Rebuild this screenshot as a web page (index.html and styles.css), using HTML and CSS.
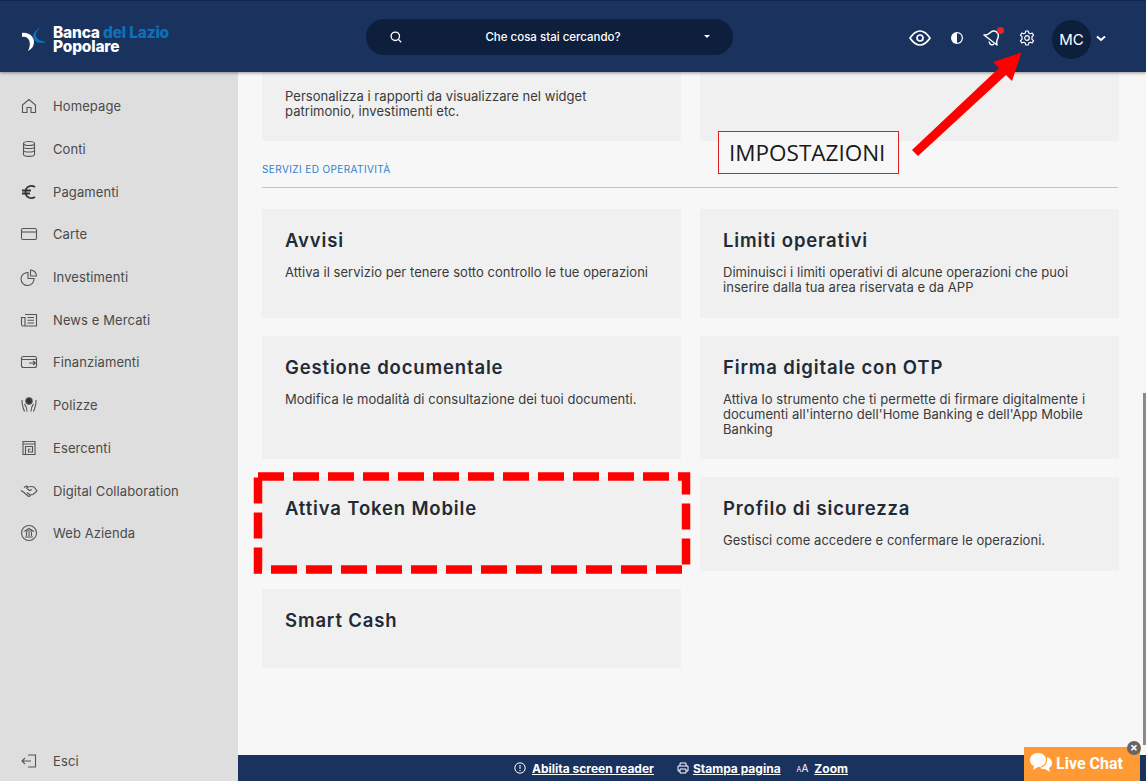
FILE: index.html
```html
<!DOCTYPE html>
<html lang="it">
<head>
    <title>Impostazioni</title>
    <link rel="stylesheet" href="styles.css">
</head>
<body>
    <header class="topbar">
        <div class="logo">
            <svg class="logo-mark" width="26" height="28" viewBox="0 0 26 28">
                <path d="M0 10 C6 9 12 13 12 19 C12 23 10 26 6 28 C8 24 8.500 20 7 17 C5.500 14 3 13 0 14 Z" fill="#fff"/>
                <path d="M18 4 C17 7 13 9 14 13 C15 17 20 18 24 19 C19 21 12 20 11 14 C11 9 15 7 18 4 Z" fill="#0a72bd"/>
            </svg>
            <div class="logo-text">
                <div class="logo-line">Banca <span class="logo-blue">del Lazio</span></div>
                <div class="logo-line">Popolare</div>
            </div>
        </div>
        <div class="search">
            <svg width="12" height="12" viewBox="0 0 12 12" fill="none" stroke="#fff" stroke-width="1.3"><circle cx="5.3" cy="5.3" r="4.2"/><path d="M8.4 8.4 L11.2 11.2"/></svg>
            <span class="search-text">Che cosa stai cercando?</span>
            <span class="search-caret"></span>
        </div>
        <div class="tools">
            <svg class="tool-eye" width="22" height="16" viewBox="0 0 22 16" fill="none" stroke="#fff" stroke-width="1.7"><path d="M1 8 C5 2 8 1 11 1 C14 1 17 2 21 8 C17 14 14 15 11 15 C8 15 5 14 1 8 Z"/><circle cx="11" cy="8" r="3"/></svg>
            <svg class="tool-contrast" width="14" height="14" viewBox="0 0 14 14"><circle cx="7" cy="7" r="6" fill="#fff"/><path d="M7 2.200 A4.800 4.800 0 0 1 7 11.800 Z" fill="#1a325e"/></svg>
            <div class="tool-bell">
                <svg width="18" height="18" viewBox="0 0 18 18" fill="none" stroke="#fff" stroke-width="1.500" stroke-linejoin="round"><path d="M1 6 C4 6.500 6 5 8 3 C10 1 13 2 14.500 4 C16 6 15.500 8 14.500 10 C13.500 12 13.500 14 14 16 Z"/><path d="M6 12.500 C6.500 15.500 9 16.800 11 15"/></svg>
                <span class="bell-dot"></span>
            </div>
            <svg class="tool-gear" width="16" height="16" viewBox="0 0 16 16" fill="none" stroke="#fff" stroke-width="1.2" stroke-linejoin="round"><circle cx="8" cy="8" r="2.300"/><path d="M6.700 1 H9.300 L9.700 3 L11.300 3.800 L13.200 3 L14.500 5.200 L13 6.600 V9.400 L14.500 10.800 L13.200 13 L11.300 12.200 L9.700 13 L9.300 15 H6.700 L6.300 13 L4.700 12.200 L2.800 13 L1.500 10.800 L3 9.400 V6.600 L1.500 5.200 L2.800 3 L4.700 3.800 L6.300 3 Z"/></svg>
            <div class="avatar">MC</div>
            <svg class="tool-chevron" width="10" height="7" viewBox="0 0 10 7" fill="none" stroke="#fff" stroke-width="2"><path d="M1 1.500 L5 5 L9 1.500"/></svg>
        </div>
    </header>

    <div class="page">
        <nav class="sidebar">
            <ul class="menu">
                <li class="menu-item">
                    <svg class="menu-icon" viewBox="0 0 18 18"><path d="M2.500 8 L9 2.500 L15.500 8 V15.500 H11 V10.500 H7 V15.500 H2.500 Z"/></svg>
                    Homepage
                </li>
                <li class="menu-item">
                    <svg class="menu-icon" viewBox="0 0 18 18"><ellipse cx="9" cy="3.500" rx="5.500" ry="2"/><path d="M3.500 3.500 V14.500 C3.500 17 14.500 17 14.500 14.500 V3.500 M3.500 7 C3.500 9 14.500 9 14.500 7 M3.500 10.500 C3.500 12.500 14.500 12.500 14.500 10.500"/></svg>
                    Conti
                </li>
                <li class="menu-item">
                    <svg class="menu-icon menu-icon-bold" viewBox="0 0 18 18"><path d="M15 4 C11 1.500 5.500 3.500 5.500 9 C5.500 14.500 11 16.500 15 14 M2 7.500 H11 M2 10.500 H10"/></svg>
                    Pagamenti
                </li>
                <li class="menu-item">
                    <svg class="menu-icon" viewBox="0 0 18 18"><rect x="1.500" y="3.500" width="15" height="11" rx="1.500"/><path d="M1.500 7 H16.500"/></svg>
                    Carte
                </li>
                <li class="menu-item">
                    <svg class="menu-icon" viewBox="0 0 18 18"><path d="M8 4.500 A6.500 6.500 0 1 0 14 10.500 H8 Z"/><path d="M10.500 2 A6 6 0 0 1 16.500 8 H10.500 Z"/></svg>
                    Investimenti
                </li>
                <li class="menu-item">
                    <svg class="menu-icon" viewBox="0 0 18 18"><path d="M5 3.500 H16.500 V15 H3 C1.800 15 1.500 14.300 1.500 13.500 V6.500 H5 V15 M7.500 6.500 H14 M7.500 9.300 H14 M7.500 12 H14"/></svg>
                    News e Mercati
                </li>
                <li class="menu-item">
                    <svg class="menu-icon" viewBox="0 0 18 18"><rect x="1.500" y="3.500" width="15" height="11" rx="2"/><path d="M1.500 6.500 H16.500 M9 10 H15 M13 8 L15.500 10 L13 12"/></svg>
                    Finanziamenti
                </li>
                <li class="menu-item">
                    <svg class="menu-icon" viewBox="0 0 18 18"><circle class="menu-icon-fill" cx="9" cy="5" r="3.200"/><path d="M2 4 C1.500 9 3 11 4.500 15.500 M16 4 C16.500 9 15 11 13.500 15.500 M4.500 8 C6 10 7 11 7 15.500 M13.500 8 C12 10 11 11 11 15.500"/></svg>
                    Polizze
                </li>
                <li class="menu-item">
                    <svg class="menu-icon" viewBox="0 0 18 18"><path d="M3 2.500 H15 V15.500 H3 Z M3 5 H15 M5.500 15.500 V7.500 H12.500 V13 H8.500 V10.300 H10.500"/></svg>
                    Esercenti
                </li>
                <li class="menu-item">
                    <svg class="menu-icon" viewBox="0 0 18 18"><path d="M1 8.500 L4 10.500 L8 14 C9 14.800 10.500 14 10 13 L13 12.500 L17 9 L14 5 C11 4 9 4 6.500 6 L9.500 8.500 L12 7.500 M4 5.500 C5.500 4 7 4 8 4.500 M10 13 L7 10.500"/></svg>
                    Digital Collaboration
                </li>
                <li class="menu-item">
                    <svg class="menu-icon" viewBox="0 0 18 18"><circle cx="9" cy="9" r="7.500"/><path d="M5 7 L9 4.500 L13 7 Z M5 13 H13 M6.500 8 V12 M9 8 V12 M11.500 8 V12"/></svg>
                    Web Azienda
                </li>
            </ul>
            <div class="menu-item menu-exit">
                <svg class="menu-icon" viewBox="0 0 18 18"><path d="M8 3 H15.500 V15 H8 M11 9 H2 M5 6 L2 9 L5 12"/></svg>
                Esci
            </div>
        </nav>

        <div class="content">
            <main class="main">
                <div class="cards cards-top">
                    <div class="card card-clipped">
                        <p class="card-text">Personalizza i rapporti da visualizzare nel widget<br>patrimonio, investimenti etc.</p>
                    </div>
                    <div class="card"></div>
                </div>

                <div class="section-title">SERVIZI ED OPERATIVITÀ</div>

                <div class="cards">
                    <div class="card">
                        <h3 class="card-title">Avvisi</h3>
                        <p class="card-text">Attiva il servizio per tenere sotto controllo le tue operazioni</p>
                    </div>
                    <div class="card">
                        <h3 class="card-title">Limiti operativi</h3>
                        <p class="card-text">Diminuisci i limiti operativi di alcune operazioni che puoi inserire dalla tua area riservata e da APP</p>
                    </div>
                    <div class="card">
                        <h3 class="card-title">Gestione documentale</h3>
                        <p class="card-text">Modifica le modalità di consultazione dei tuoi documenti.</p>
                    </div>
                    <div class="card">
                        <h3 class="card-title">Firma digitale con OTP</h3>
                        <p class="card-text">Attiva lo strumento che ti permette di firmare digitalmente i documenti all'interno dell'Home Banking e dell'App Mobile Banking</p>
                    </div>
                    <div class="card">
                        <h3 class="card-title">Attiva Token Mobile</h3>
                    </div>
                    <div class="card">
                        <h3 class="card-title">Profilo di sicurezza</h3>
                        <p class="card-text">Gestisci come accedere e confermare le operazioni.</p>
                    </div>
                    <div class="card">
                        <h3 class="card-title">Smart Cash</h3>
                    </div>
                </div>
            </main>

            <footer class="footer">
                <span class="footer-item footer-reader">
                    <svg width="12" height="12" viewBox="0 0 12 12" fill="none" stroke="#fff" stroke-width="1"><circle cx="6" cy="6" r="5.200"/><path d="M6 3 V7 M6 8 V9.200"/></svg>
                    <a class="footer-link">Abilita screen reader</a>
                </span>
                <span class="footer-item footer-print">
                    <svg width="12" height="12" viewBox="0 0 12 12" fill="none" stroke="#fff" stroke-width="1"><path d="M3 4 V1 H9 V4 M3 9 H1 V4 H11 V9 H9 M3 7 H9 V11 H3 Z"/></svg>
                    <a class="footer-link">Stampa pagina</a>
                </span>
                <span class="footer-item">
                    <span class="footer-zoom"><small>A</small>A</span>
                    <a class="footer-link">Zoom</a>
                </span>
            </footer>
        </div>
    </div>

    <div class="scroll-thumb"></div>

    <!-- annotazioni sopra lo screenshot -->
    <div class="note">IMPOSTAZIONI</div>
    <svg class="overlay" width="1146" height="781" viewBox="0 0 1146 781">
        <polygon points="912,150 918,156 1006,75 1012,81 1021.500,52.500 993,62 999,68" fill="#ff0000"/>
        <rect x="258" y="476.500" width="428" height="93" fill="none" stroke="#ff0000" stroke-width="8.500" stroke-dasharray="26 9"/>
    </svg>

    <div class="chat">
        <svg width="24" height="22" viewBox="0 0 24 22" fill="#fff"><path d="M9 1 C14 1 17 4 17 8 C17 12 13 15 9 15 L4 18 L5 14 C2 13 1 10 1 8 C1 4 4 1 9 1 Z"/><path d="M18 5 C21 6 23 8 23 11 C23 13 22 15 20 16 L21 20 L16 17 C13.500 17 12 16.500 11 15.500 C15 15.500 19 12 18 5 Z"/></svg>
        Live Chat
        <span class="chat-close">×</span>
    </div>
</body>
</html>
```

FILE: styles.css
```css
* {
    box-sizing: border-box;
}

html, body {
    height: 781px;
}

body {
    font-family: Inter, "Liberation Sans", sans-serif;
    margin: 0;
    background-color: #f7f7f7;
    overflow: hidden;
    display: flex;
    flex-direction: column;
}

.topbar {
    height: 72px;
    flex: none;
    background-color: #1a325e;
    border-top: 1px solid #12254a;
    box-shadow: 0 1px 3px rgba(0, 0, 0, 0.4);
    position: relative;
    display: flex;
    align-items: center;
    padding-left: 22px;
}

.logo {
    width: 344px;
    display: flex;
    align-items: center;
    gap: 5px;
}

.logo-text {
    margin-top: 6px;
    font-size: 15.5px;
    font-weight: 800;
    color: #ffffff;
    letter-spacing: -0.2px;
}

.logo-line {
    height: 14px;
    line-height: 14px;
}

.logo-blue {
    color: #0a72bd;
}

.search {
    width: 367px;
    height: 36px;
    border-radius: 18px;
    background-color: #0e1f3d;
    display: flex;
    align-items: center;
    padding: 0 23px 0 24px;
    color: #ffffff;
    font-size: 11.5px;
}

.search-text {
    flex: 1;
    text-align: center;
    font-weight: 500;
}

.search-caret {
    border-left: 3px solid transparent;
    border-right: 3px solid transparent;
    border-top: 3px solid #ffffff;
}

.tools {
    flex: 1;
    display: flex;
    align-items: center;
    padding-left: 176px;
    padding-top: 3px;
}

.tool-contrast {
    margin-left: 19px;
}

.tool-bell {
    margin-left: 19px;
    position: relative;
    height: 18px;
}

.bell-dot {
    position: absolute;
    top: -2px;
    right: -3px;
    width: 7px;
    height: 7px;
    border-radius: 50%;
    background-color: #e8232a;
}

.tool-gear {
    margin-left: 18px;
}

.avatar {
    width: 39px;
    height: 39px;
    margin-left: 17px;
    margin-top: 2px;
    border-radius: 50%;
    background-color: #0e1f3d;
    color: #ffffff;
    font-size: 15px;
    display: flex;
    align-items: center;
    justify-content: center;
}

.tool-chevron {
    margin-left: 5px;
}

.page {
    flex: 1;
    display: flex;
    min-height: 0;
}

.sidebar {
    width: 238px;
    flex: none;
    background-color: #dedede;
    padding: 13px 0 0 0;
    display: flex;
    flex-direction: column;
    justify-content: space-between;
}

.menu {
    list-style: none;
    margin: 0;
    padding: 0;
}

.menu-item {
    height: 42.7px;
    display: flex;
    align-items: center;
    gap: 15px;
    padding-left: 20px;
    font-size: 13px;
    letter-spacing: 0.1px;
    color: #4a4a4a;
}

.menu-exit {
    padding-top: 2px;
}

.menu-icon {
    width: 18px;
    height: 18px;
    fill: none;
    stroke: #555555;
    stroke-width: 1.1;
}

.menu-icon-bold {
    stroke: #333333;
    stroke-width: 1.8;
}

.menu-icon-fill {
    fill: #333333;
}

.content {
    flex: 1;
    min-width: 0;
    display: flex;
    flex-direction: column;
}

.main {
    flex: 1;
    padding: 0 28px 0 24px;
}

.cards {
    display: grid;
    grid-template-columns: 419px 419px;
    grid-template-rows: 109px 123px 94px 79px;
    column-gap: 19px;
    row-gap: 18px;
}

.cards-top {
    grid-template-rows: 69px;
}

.card {
    background-color: #f0f0f0;
    padding: 20px 23px;
}

.card-clipped {
    padding-top: 17px;
}

.card-title {
    margin: 0 0 14px 0;
    font-size: 18.5px;
    line-height: 22px;
    font-weight: 600;
    letter-spacing: 0.85px;
    color: #222a35;
}

.card-text {
    margin: 0;
    font-size: 13px;
    line-height: 15px;
    letter-spacing: 0.04px;
    color: #3a3a3a;
}

.section-title {
    margin-top: 21px;
    height: 26px;
    border-bottom: 1px solid #c4c4c4;
    margin-bottom: 21px;
    font-size: 10px;
    line-height: 14px;
    letter-spacing: 0.4px;
    color: #2f7fd0;
}

.footer {
    height: 26px;
    flex: none;
    background-color: #1a325e;
    display: flex;
    align-items: center;
    padding-left: 276px;
    gap: 16px;
    color: #ffffff;
    font-size: 12px;
    font-weight: 700;
}

.footer-item {
    display: flex;
    align-items: center;
    gap: 6px;
}

.footer-reader {
    margin-right: 7px;
}

.footer-print {
    gap: 4px;
}

.footer-link {
    text-decoration: underline;
}

.footer-zoom {
    font-size: 10px;
    font-weight: 400;
}

.footer-zoom small {
    font-size: 7px;
}

.scroll-thumb {
    position: absolute;
    right: 0;
    top: 393px;
    width: 3px;
    height: 352px;
    background-color: #8a8a8a;
}

.note {
    position: absolute;
    left: 718px;
    top: 131px;
    width: 181px;
    height: 43px;
    border: 1px solid #e02020;
    background-color: #f7f7f7;
    font-family: "Open Sans", sans-serif;
    font-size: 22.500px;
    line-height: 41px;
    padding-left: 10px;
    color: #1a1a1a;
}

.overlay {
    position: absolute;
    left: 0;
    top: 0;
    pointer-events: none;
}

.chat {
    position: absolute;
    left: 1024px;
    top: 747px;
    width: 116px;
    height: 34px;
    background-color: #ff9a35;
    color: #ffffff;
    font-family: Roboto, sans-serif;
    font-weight: 700;
    font-size: 16px;
    display: flex;
    align-items: center;
    gap: 3px;
    padding: 0 0 2px 5px;
}

.chat-close {
    position: absolute;
    right: -1px;
    top: -6px;
    width: 14px;
    height: 14px;
    border-radius: 50%;
    background-color: #666666;
    font-size: 13px;
    line-height: 14px;
    text-align: center;
}
```
